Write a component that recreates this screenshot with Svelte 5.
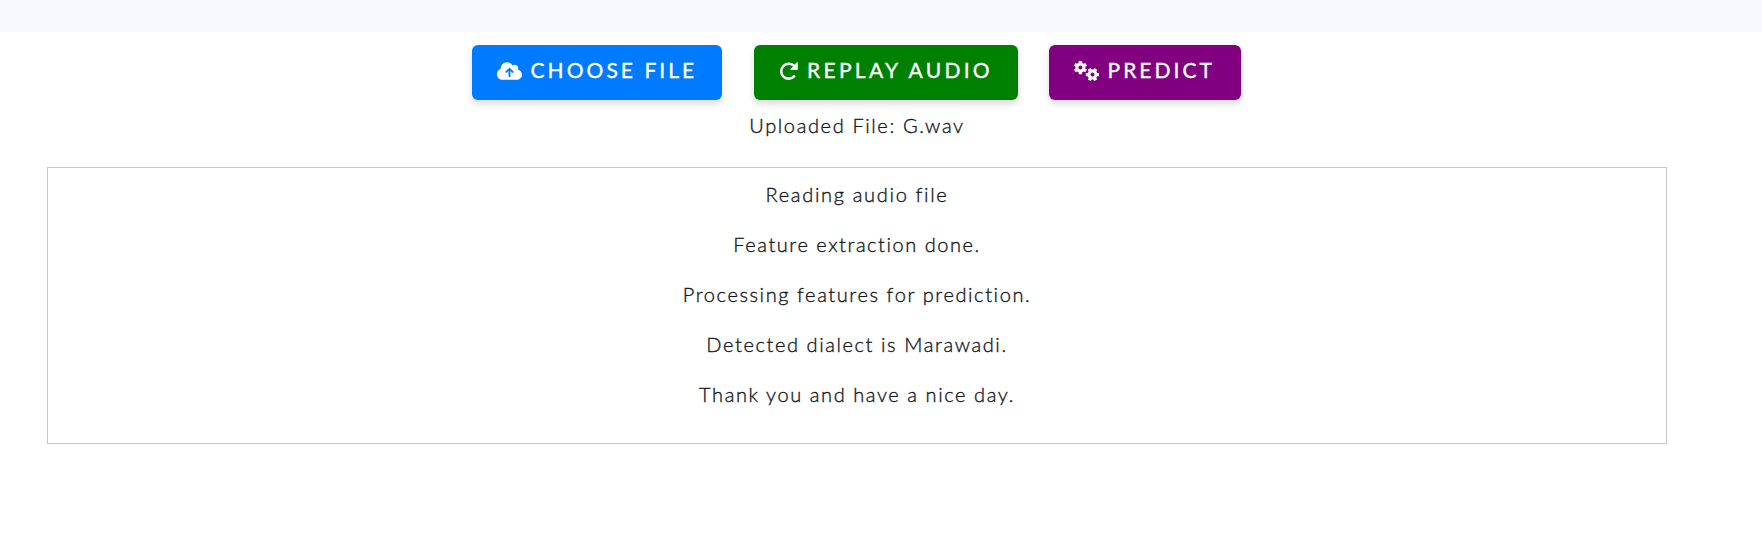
<script>
  const buttons = [
    { id: 'choose', label: 'CHOOSE FILE', spacing: 3.05 },
    { id: 'replay', label: 'REPLAY AUDIO', spacing: 3.3 },
    { id: 'predict', label: 'PREDICT', spacing: 3.05 }
  ];
  const messages = [
    { text: 'Reading audio file', spacing: 1.69 },
    { text: 'Feature extraction done.', spacing: 1.54 },
    { text: 'Processing features for prediction.', spacing: 1.6 },
    { text: 'Detected dialect is Marawadi.', spacing: 1.6 },
    { text: 'Thank you and have a nice day.', spacing: 1.58 }
  ];
  const gears = [
    { x: 6.4, y: 6.6, turn: 0 },
    { x: 18.5, y: 13.6, turn: 30 }
  ];
</script>

<div class="strip"></div>
<main>
  <div class="actions">
    {#each buttons as b}
      <button class={b.id}>
        {#if b.id === 'choose'}
          <svg width="25" height="20" viewBox="0 0 640 512"><path fill="#fff" d="M144 480C64.500 480 0 415.500 0 336c0-62.800 40.200-116.200 96.200-135.900-.1-2.700-.2-5.400-.2-8.100 0-88.400 71.600-160 160-160 59.300 0 111 32.200 138.700 80.200C409.900 102 428.300 96 448 96c53 0 96 43 96 96 0 12.200-2.300 23.800-6.400 34.600C596 238.400 640 290.100 640 352c0 70.700-57.300 128-128 128H144zm79-217c-9.400 9.400-9.400 24.600 0 33.900s24.600 9.400 33.900 0l39-39V392c0 13.300 10.700 24 24 24s24-10.700 24-24V257.900l39 39c9.400 9.400 24.600 9.400 33.900 0s9.400-24.600 0-33.900l-80-80c-9.400-9.400-24.600-9.400-33.900 0l-80 80z" /></svg>
        {:else if b.id === 'replay'}
          <svg width="20" height="20" viewBox="0 0 20 20">
            <path d="M15.300 5.200A7.500 7.500 0 1 0 15.200 15.400" fill="none" stroke="#fff" stroke-width="2.500" stroke-linecap="round" />
            <path d="M18.800 1.900V8.300Q18.800 9 18.100 9H11.900Q10.800 8.800 11.500 7.800L17.500 1.600Q18.500 .8 18.800 1.900z" fill="#fff" />
            <path d="M14.600 4.800L11.500 7.700L10.500 5.800z" fill="#008000" />
          </svg>
        {:else}
          <svg width="25" height="20" viewBox="0 0 25 20">
            {#each gears as g}
              <g transform="translate({g.x} {g.y}) rotate({g.turn})">
                <circle r="3.500" fill="none" stroke="#fff" stroke-width="3" />
                {#each [0, 60, 120, 180, 240, 300] as a}
                  <rect x="-1.700" y="-6.600" width="3.400" height="3" rx=".6" fill="#fff" transform="rotate({a})" />
                {/each}
              </g>
            {/each}
          </svg>
        {/if}
        <span style:letter-spacing="{b.spacing}px">{b.label}</span>
      </button>
    {/each}
  </div>
  <p class="upload">Uploaded File: G.wav</p>
  <section>
    {#each messages as m}
      <p style:letter-spacing="{m.spacing}px">{m.text}</p>
    {/each}
  </section>
</main>

<style>
  :global(body) { margin: 0; background: #fff; }
  .strip { height: 32px; background: #f8f9fc; }
  main { padding: 13px 95px 0 47px; font-family: Lato, sans-serif; font-size: 20px; font-weight: 300; color: #14181c; }
  .actions { display: flex; width: 769px; margin-left: 425px; justify-content: space-between; }
  button { height: 55px; padding: 0 0 3px 25px; border: 0; border-radius: 6px; display: flex; align-items: center; color: #fff; font: 400 21px Lato, sans-serif; white-space: nowrap; box-shadow: 0 4px 6px rgba(0, 0, 0, .14); }
  svg { flex: none; }
  button span { margin: 0 0 3px 8.5px; -webkit-text-stroke: .35px #fff; }
  .choose { width: 250px; background: #007bff; }
  .replay { width: 264px; background: #008000; }
  .predict { width: 192px; background: #800080; }
  p { margin: 0; height: 30px; line-height: 30px; text-align: center; white-space: nowrap; -webkit-text-stroke: .35px #14181c; }
  .upload { margin-top: 10px; letter-spacing: 1.63px; }
  section { box-sizing: border-box; height: 277px; margin-top: 27px; padding-top: 11px; border: 1px solid #c8c8c8; display: flex; flex-direction: column; gap: 20px; }
</style>
